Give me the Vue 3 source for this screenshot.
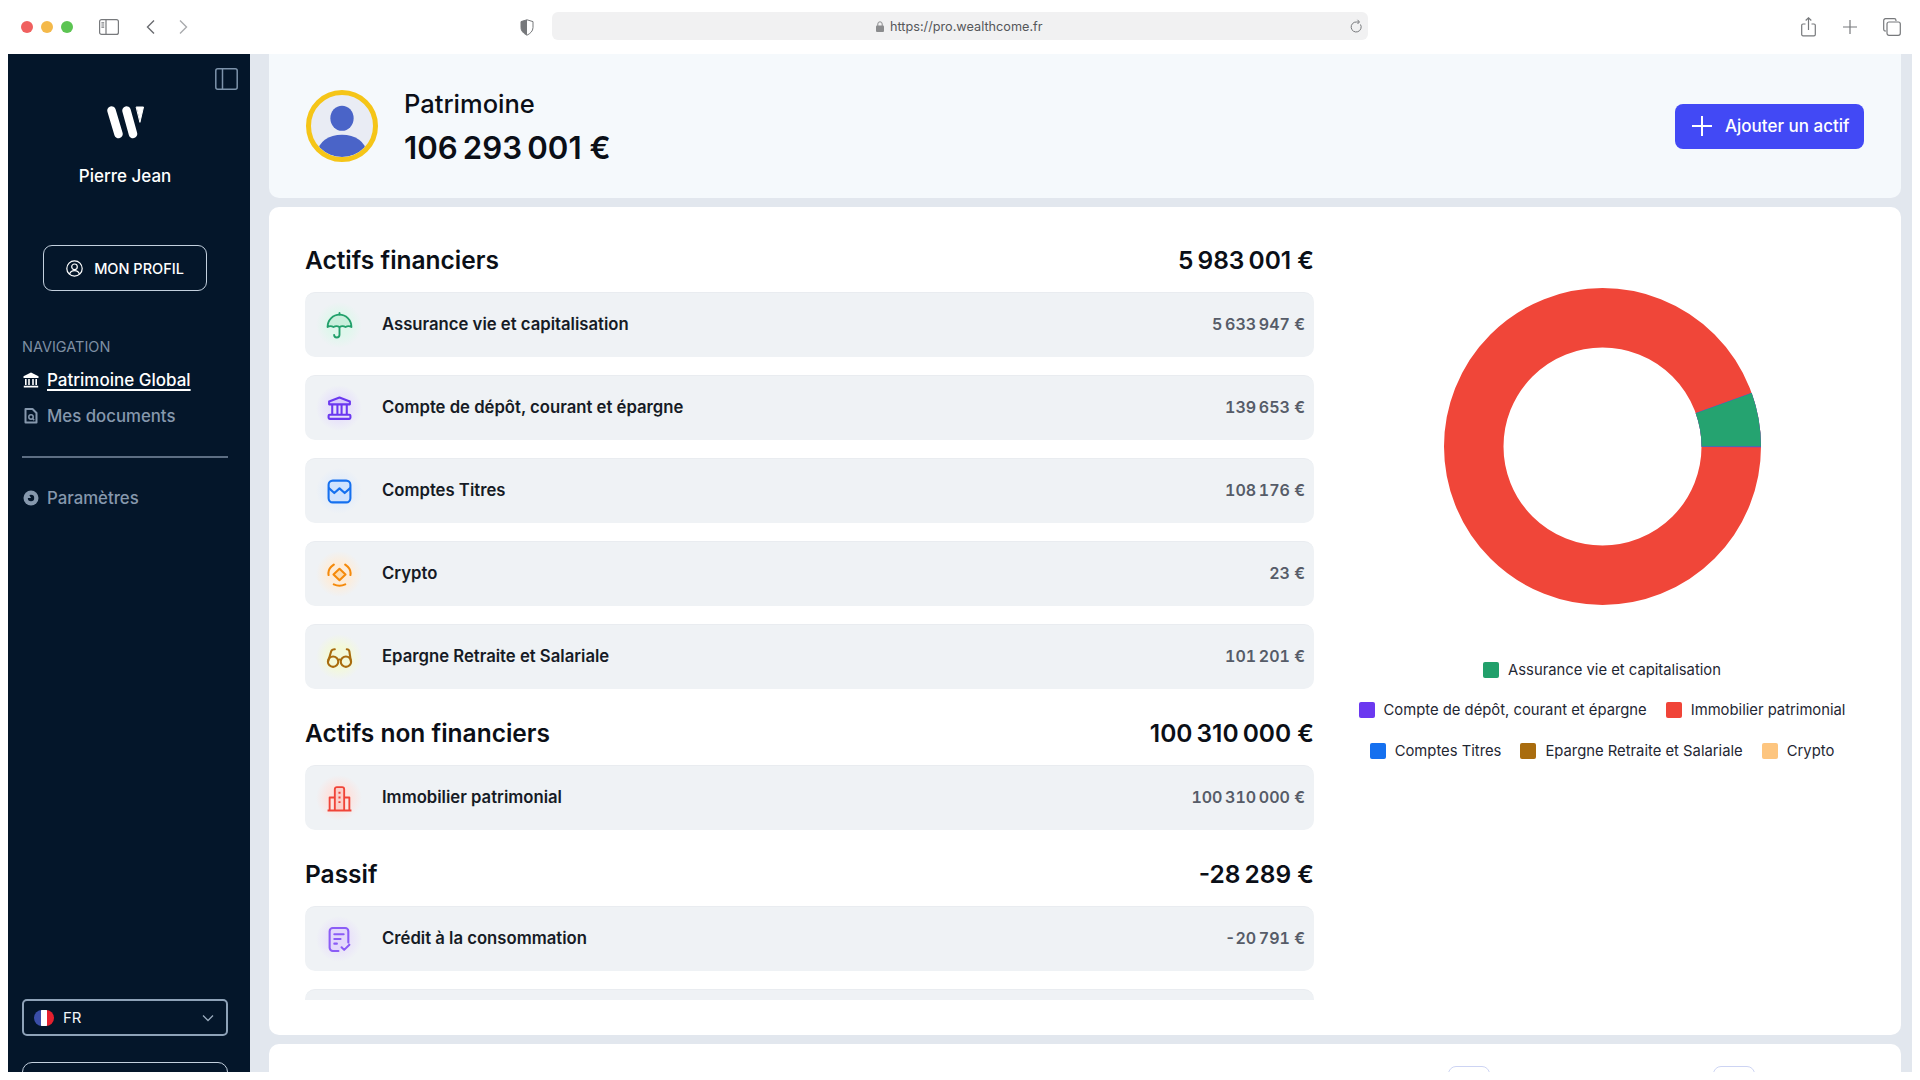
<script setup>
import { computed } from 'vue'

const sections = [
  {
    title: 'Actifs financiers',
    total: '5\u202f983\u202f001\u00a0€',
    rows: [
      { icon: 'umbrella', tone: 'green', name: 'Assurance vie et capitalisation', value: '5\u202f633\u202f947\u00a0€' },
      { icon: 'bank', tone: 'violet', name: 'Compte de dépôt, courant et épargne', value: '139\u202f653\u00a0€' },
      { icon: 'picture', tone: 'blue', name: 'Comptes Titres', value: '108\u202f176\u00a0€' },
      { icon: 'crypto', tone: 'orange', name: 'Crypto', value: '23\u00a0€' },
      { icon: 'glasses', tone: 'brown', name: 'Epargne Retraite et Salariale', value: '101\u202f201\u00a0€' }
    ]
  },
  {
    title: 'Actifs non financiers',
    total: '100\u202f310\u202f000\u00a0€',
    rows: [{ icon: 'building', tone: 'red', name: 'Immobilier patrimonial', value: '100\u202f310\u202f000\u00a0€' }]
  },
  {
    title: 'Passif',
    total: '-28\u202f289\u00a0€',
    rows: [
      { icon: 'doc', tone: 'lilac', name: 'Crédit à la consommation', value: '-20\u202f791\u00a0€' },
      { icon: '', tone: 'lilac', name: '', value: '' }
    ]
  }
]

const legendRows = [
  [{ label: 'Assurance vie et capitalisation', color: '#22a06b' }],
  [
    { label: 'Compte de dépôt, courant et épargne', color: '#6b38f0' },
    { label: 'Immobilier patrimonial', color: '#f04438' }
  ],
  [
    { label: 'Comptes Titres', color: '#1570ef' },
    { label: 'Epargne Retraite et Salariale', color: '#a96c0e' },
    { label: 'Crypto', color: '#fdc57f' }
  ]
]

const radius = 128.75
const circumference = 2 * Math.PI * radius
const greenArc = computed(() => (19.7 / 360) * circumference)
</script>

<template>
  <div class="window">
    <header class="chrome">
      <div class="chrome-left">
        <span class="light light-red"></span>
        <span class="light light-amber"></span>
        <span class="light light-green"></span>
        <svg class="chrome-sidebar" width="20" height="16" viewBox="0 0 20 16" fill="none" stroke="#77797c" stroke-width="1.2">
          <rect x="0.6" y="0.6" width="18.8" height="14.8" rx="2" />
          <path d="M7 .6v14.8M2.4 3.8h2.8M2.4 6h2.8M2.4 8.2h2.8" />
        </svg>
        <svg class="chrome-back" width="11" height="16" viewBox="0 0 11 16" fill="none" stroke="#6a6c70" stroke-width="1.4">
          <path d="M9 1.5 2.5 8 9 14.5" />
        </svg>
        <svg class="chrome-forward" width="11" height="16" viewBox="0 0 11 16" fill="none" stroke="#a9abae" stroke-width="1.4">
          <path d="M2 1.5 8.500 8 2 14.500" />
        </svg>
        <svg class="chrome-shield" width="14" height="17" viewBox="0 0 14 17">
          <path d="M7 .8 1 2.600v6c0 3.500 2.800 6 6 7.600 3.200-1.600 6-4.100 6-7.600v-6z" fill="#fff" stroke="#76787b" stroke-width="1" />
          <path d="M7 .8 1 2.600v6c0 3.500 2.800 6 6 7.600z" fill="#76787b" />
        </svg>
      </div>
      <div class="url-bar">
        <span class="url-main">
          <svg width="8" height="11" viewBox="0 0 8 11">
            <rect y="4.500" width="8" height="6.500" rx="1" fill="#8b8c8e" />
            <path d="M1.800 5V3a2.200 2.200 0 0 1 4.400 0v2" fill="none" stroke="#8b8c8e" stroke-width="1" />
          </svg>
          <span class="url-text">https://pro.wealthcome.fr</span>
        </span>
        <svg class="url-reload" width="12" height="14" viewBox="0 0 12 14" fill="none" stroke="#77797c" stroke-width="1">
          <path d="M10.500 5.500A5 5 0 1 1 6.500 3H9" />
          <path d="M7.500 .8 9.500 3 7.500 5" />
        </svg>
      </div>
      <div class="chrome-right">
        <svg width="15" height="20" viewBox="0 0 15 20" fill="none" stroke="#77797c" stroke-width="1.200">
          <path d="M4.500 7H2a1.300 1.300 0 0 0-1.300 1.300v9.200A1.300 1.300 0 0 0 2 18.800h11a1.300 1.300 0 0 0 1.300-1.300V8.300A1.300 1.300 0 0 0 13 7h-2.500" />
          <path d="M7.500 13V1M4.700 3.500 7.500.8l2.800 2.700" />
        </svg>
        <svg width="14" height="14" viewBox="0 0 14 14" fill="none" stroke="#77797c" stroke-width="1.200">
          <path d="M7 0v14M0 7h14" />
        </svg>
        <svg width="18" height="18" viewBox="0 0 18 18" fill="none" stroke="#77797c" stroke-width="1.200">
          <path d="M3 13H2.500A1.800 1.800 0 0 1 .7 11.200V2.500A1.800 1.800 0 0 1 2.500.7h8.700A1.800 1.800 0 0 1 13 2.500V3" />
          <rect x="4" y="4" width="13.300" height="13.300" rx="2" />
        </svg>
      </div>
    </header>

    <div class="app">
      <aside class="sidebar">
        <div class="side-top">
          <svg class="collapse" width="23" height="22" viewBox="0 0 23 22" fill="none" stroke="#7d93ab" stroke-width="1.500">
            <rect x="0.800" y="0.800" width="21.400" height="20.400" rx="2" />
            <path d="M7.500 .8v20.400" />
          </svg>
        </div>
        <svg class="logo" width="38" height="33" viewBox="0 0 38 33" fill="#fff" stroke="#fff" stroke-linecap="round">
          <path d="M4.500 4.500 11.500 28" stroke-width="8.500" fill="none" />
          <path d="M19.500 4.500 26 28" stroke-width="8.500" fill="none" />
          <path d="M29.500 1h7L33 16z" stroke-width="1" stroke-linejoin="round" />
        </svg>
        <div class="user-name">Pierre Jean</div>
        <button class="profile-btn">
          <svg width="17" height="17" viewBox="0 0 17 17" fill="none" stroke="#fff" stroke-width="1.200">
            <circle cx="8.500" cy="8.500" r="7.700" />
            <circle cx="8.500" cy="6.800" r="2.800" />
            <path d="M3.500 14.200c.8-2.500 2.700-3.500 5-3.500s4.200 1 5 3.500" />
          </svg>
          MON PROFIL
        </button>
        <div class="nav-title">NAVIGATION</div>
        <a class="nav-item active">
          <svg width="16" height="16" viewBox="0 0 16 16" fill="#fff">
            <path d="M8 .5.5 4.300V6h15V4.300z" />
            <path d="M2 7h1.600v6H2zM5.200 7h1.600v6H5.200zM9.200 7h1.600v6H9.200zM12.400 7H14v6h-1.600zM.8 13.800h14.400v1.700H.8z" />
          </svg>
          <span>Patrimoine Global</span>
        </a>
        <a class="nav-item">
          <svg width="16" height="16" viewBox="0 0 16 16" fill="none" stroke="#8698ad" stroke-width="2">
            <path d="M2.500 1h7L13.500 5v9.500h-11z" stroke-linejoin="round" />
            <circle cx="8" cy="9" r="2.200" stroke-width="1.500" />
            <path d="m9.700 10.700 1.500 1.500" stroke-width="1.500" />
          </svg>
          <span>Mes documents</span>
        </a>
        <div class="nav-divider"></div>
        <a class="nav-item">
          <svg width="16" height="16" viewBox="0 0 16 16">
            <circle cx="8" cy="8" r="7.500" fill="#8698ad" />
            <circle cx="8" cy="8" r="3.200" fill="#04162a" />
            <path d="M3.500 8H8L5.500 3.500z" fill="#8698ad" />
          </svg>
          <span>Paramètres</span>
        </a>
        <div class="lang-select">
          <span class="flag"><i class="f-blue"></i><i class="f-white"></i><i class="f-red"></i></span>
          <span class="lang-code">FR</span>
          <svg class="lang-caret" width="12" height="8" viewBox="0 0 12 8" fill="none" stroke="#9aabbd" stroke-width="1.300">
            <path d="m1 1.500 5 5 5-5" />
          </svg>
        </div>
        <div class="side-bottom-btn"></div>
      </aside>

      <main class="content">
        <section class="summary">
          <div class="avatar">
            <svg width="62" height="62" viewBox="0 0 64 64">
              <defs>
                <clipPath id="avatar-clip"><circle cx="32" cy="32" r="32" /></clipPath>
              </defs>
              <g clip-path="url(#avatar-clip)" fill="#4a64c8">
                <ellipse cx="32" cy="24" rx="12" ry="13" />
                <ellipse cx="32" cy="59" rx="25" ry="18" />
              </g>
            </svg>
          </div>
          <div class="summary-text">
            <div class="summary-title">Patrimoine</div>
            <div class="summary-total">106&#8239;293&#8239;001&nbsp;€</div>
          </div>
          <button class="add-btn">
            <svg width="20" height="20" viewBox="0 0 20 20" stroke="#fff" stroke-width="2">
              <path d="M10 0v20M0 10h20" />
            </svg>
            Ajouter un actif
          </button>
        </section>

        <section class="main-card">
          <div class="list-col">
            <div v-for="section in sections" :key="section.title" class="group">
              <div class="group-head">
                <h2>{{ section.title }}</h2>
                <span>{{ section.total }}</span>
              </div>
              <div class="rows">
                <div v-for="row in section.rows" :key="row.name" class="row">
                  <span class="icon-wrap" :class="'tone-' + row.tone">
                    <svg v-if="row.icon === 'umbrella'" width="27" height="27" viewBox="0 0 26 26" fill="none" stroke="#22a06b" stroke-width="1.800" stroke-linecap="round" stroke-linejoin="round">
                      <path d="M1.500 14.500C1.500 7.500 7 2.500 13 2.500s11.500 5 11.500 12c-1.700-1.100-3.900-1.100-5.700 0-1.800-1.100-4-1.100-5.800 0-1.800-1.100-4-1.100-5.800 0-1.800-1.100-4-1.100-5.700 0z" fill="#c9efdc" />
                      <path d="M13 2.500V1M13 14.500V22a2.600 2.600 0 0 1-5.200 0" />
                    </svg>
                    <svg v-else-if="row.icon === 'bank'" width="27" height="27" viewBox="0 0 26 26" fill="none" stroke="#6b38f0" stroke-width="2" stroke-linejoin="round">
                      <path d="M13 2.500 3 6.200V9h20V6.200z" fill="#d8ccfb" />
                      <path d="M6 9v10M11 9v10M15 9v10M20 9v10" />
                      <rect x="2.500" y="19" width="21" height="4" rx="1" />
                    </svg>
                    <svg v-else-if="row.icon === 'picture'" width="27" height="27" viewBox="0 0 26 26" fill="none" stroke="#1570ef" stroke-width="2" stroke-linejoin="round">
                      <rect x="2.500" y="2.500" width="21" height="21" rx="4" fill="#cfe2fd" />
                      <path d="M2.500 9.500 8 14.500l5-4.500 5 4.500 5.500-5" />
                    </svg>
                    <svg v-else-if="row.icon === 'crypto'" width="27" height="27" viewBox="0 0 26 26" fill="none" stroke="#f58a0b" stroke-width="2" stroke-linecap="round" stroke-linejoin="round">
                      <path d="m13 7.500 5.800 5.500-5.800 5.500L7.200 13z" fill="#fddcb0" />
                      <path d="M7.500 3.500C3.800 6 1.800 10 2.500 13.500M18.500 3.500c3.700 2.500 5.700 6.500 5 10M7.500 22.500c3.500 1.700 7.500 1.700 11 0" />
                    </svg>
                    <svg v-else-if="row.icon === 'glasses'" width="27" height="27" viewBox="0 0 26 26" fill="none" stroke="#a96c0e" stroke-width="2" stroke-linecap="round">
                      <circle cx="6.800" cy="17" r="5" />
                      <circle cx="19.200" cy="17" r="5" />
                      <path d="M11.500 15.500a2.500 2.500 0 0 1 3 0M2 17 5 7c.5-1.500 1.800-2 3.500-2M24 17 22.500 7c-.3-1.500-1.300-2-2.500-2" />
                    </svg>
                    <svg v-else-if="row.icon === 'building'" width="27" height="27" viewBox="0 0 26 26" fill="none" stroke="#f04438" stroke-width="1.800" stroke-linejoin="round">
                      <path d="M1.500 24.500h23M8.500 24.500V4a2 2 0 0 1 2-2h5a2 2 0 0 1 2 2v20.500" fill="#fbd0cb" />
                      <path d="M8.500 12H3.500v12.500M17.500 12h5v12.500M12 7.500h2M12 12h2M12 16.500h2" />
                    </svg>
                    <svg v-else-if="row.icon === 'doc'" width="27" height="27" viewBox="0 0 26 26" fill="none" stroke="#8b5cf6" stroke-width="2" stroke-linecap="round" stroke-linejoin="round">
                      <path d="M12 24H6.500A3 3 0 0 1 3.500 21V5a3 3 0 0 1 3-3h12a3 3 0 0 1 3 3v11" fill="#e3d8fb" />
                      <path d="M8 8h9M8 12.500h6M8 17h2.500M15 20.500l2.500 2.500 5-5" />
                    </svg>
                  </span>
                  <span class="row-name">{{ row.name }}</span>
                  <span class="row-value">{{ row.value }}</span>
                </div>
              </div>
            </div>
          </div>

          <div class="chart-col">
            <svg class="donut" width="317" height="317" viewBox="0 0 317 317" fill="none">
              <circle cx="158.500" cy="158.500" :r="radius" stroke="#f04639" stroke-width="59.500" />
              <circle
                cx="158.500"
                cy="158.500"
                :r="radius"
                stroke="#6b38f0"
                stroke-width="59.500"
                :stroke-dasharray="(greenArc + 0.8) + ' ' + circumference"
                transform="rotate(-19.800 158.500 158.500)"
              />
              <circle
                cx="158.500"
                cy="158.500"
                :r="radius"
                stroke="#25a370"
                stroke-width="59.500"
                :stroke-dasharray="greenArc + ' ' + circumference"
                transform="rotate(-19.700 158.500 158.500)"
              />
            </svg>
            <div class="legend">
              <div v-for="(line, i) in legendRows" :key="i" class="legend-line">
                <span v-for="item in line" :key="item.label" class="legend-item">
                  <i class="swatch" :style="{ background: item.color }"></i>
                  {{ item.label }}
                </span>
              </div>
            </div>
          </div>
        </section>

        <section class="next-card">
          <span class="mini-btn"></span>
          <span class="mini-btn"></span>
        </section>
      </main>
    </div>
  </div>
</template>

<style>
html, body {
  margin: 0;
  background: #fff;
}
</style>

<style scoped>
.window {
  width: 1920px;
  height: 1080px;
  background: #fff;
  overflow: hidden;
  font-family: Inter, "Liberation Sans", sans-serif;
  color: #0b0f17;
}
.chrome {
  height: 54px;
  display: flex;
  background: #fff;
}
.chrome-left {
  width: 552px;
  height: 54px;
  box-sizing: border-box;
  padding: 0 18px 0 21px;
  display: flex;
  align-items: center;
  gap: 8px;
}
.light {
  width: 12px;
  height: 12px;
  border-radius: 50%;
}
.light-red { background: #f0605f; }
.light-amber { background: #f4b94a; }
.light-green { background: #5cc452; }
.chrome-sidebar { margin-left: 18px; }
.chrome-back { margin-left: 18px; }
.chrome-forward { margin-left: 14px; }
.chrome-shield { margin-left: auto; }
.url-bar {
  width: 816px;
  height: 28px;
  margin-top: 12px;
  box-sizing: border-box;
  padding: 0 6px 0 0;
  border-radius: 6px;
  background: #f1f1f2;
  display: flex;
  align-items: center;
}
.url-main {
  margin-left: 324px;
  display: flex;
  align-items: center;
  gap: 6px;
}
.url-text {
  font-size: 12.700px;
  color: #55575a;
  font-family: Inter, sans-serif;
}
.url-reload { margin-left: auto; }
.chrome-right {
  flex: 1;
  height: 54px;
  display: flex;
  align-items: center;
  padding-left: 433px;
  gap: 26.500px;
}
.app {
  height: 1018px;
  margin: 0 8px;
  display: flex;
  overflow: hidden;
}
.sidebar {
  width: 242px;
  flex: none;
  box-sizing: border-box;
  background: #04162a;
  padding: 14px 22px 0 14px;
  display: flex;
  flex-direction: column;
  color: #fff;
}
.side-top {
  display: flex;
  justify-content: flex-end;
  margin-right: -10px;
}
.logo {
  margin: 16px 0 0 85px;
}
.user-name {
  margin-top: 27px;
  text-align: center;
  width: 206px;
  font-size: 17px;
  font-weight: 500;
  line-height: 20px;
}
.profile-btn {
  margin: 59px 0 0 21px;
  width: 164px;
  height: 46px;
  background: none;
  border: 1.500px solid #c3d0de;
  border-radius: 9px;
  display: flex;
  align-items: center;
  justify-content: center;
  gap: 11px;
  color: #fff;
  font: 500 14.500px Inter, sans-serif;
}
.nav-title {
  margin-top: 47px;
  font-size: 14.500px;
  line-height: 18px;
  color: #7e8fa3;
}
.nav-item {
  display: flex;
  align-items: center;
  gap: 8px;
  margin: 0 0 0 1px;
  height: 36px;
  font-size: 16.800px;
  font-weight: 500;
  color: #8698ad;
}
.nav-title + .nav-item { margin-top: 6px; }
.nav-item.active {
  color: #fff;
  font-size: 17px;
}
.nav-item.active span {
  text-decoration: underline;
  text-underline-offset: 3px;
  text-decoration-thickness: 1.500px;
}
.nav-divider {
  height: 2px;
  width: 206px;
  background: #5d6e83;
  margin: 22px 0 22px;
}
.lang-select {
  margin-top: auto;
  width: 206px;
  height: 37px;
  box-sizing: border-box;
  border: 2px solid #8ea2b8;
  border-radius: 5px;
  display: flex;
  align-items: center;
  padding: 0 12px 0 10px;
}
.flag {
  width: 20px;
  height: 16px;
  border-radius: 8px;
  overflow: hidden;
  display: flex;
}
.flag i { flex: 1; }
.f-blue { background: #3a4ea8; }
.f-white { background: #fff; }
.f-red { background: #e5202e; }
.lang-code {
  margin-left: 9px;
  font-size: 15px;
  color: #f1f5f9;
}
.lang-caret { margin-left: auto; }
.side-bottom-btn {
  margin-top: 26px;
  width: 206px;
  height: 46px;
  flex: none;
  box-sizing: border-box;
  border: 1.500px solid #c3d0de;
  border-radius: 10px;
  margin-bottom: -36px;
}
.content {
  flex: 1;
  min-width: 0;
  background: #e2e7ee;
  padding: 0 11px 0 19px;
  display: flex;
  flex-direction: column;
  gap: 9px;
}
.summary {
  height: 144px;
  flex: none;
  box-sizing: border-box;
  background: #f5f9fc;
  border-radius: 0 0 10px 10px;
  display: flex;
  align-items: center;
  padding: 0 37px 0 37px;
}
.avatar {
  width: 72px;
  height: 72px;
  box-sizing: border-box;
  border: 5px solid #f5c518;
  border-radius: 50%;
  background: #e9ecf4;
  overflow: hidden;
}
.avatar svg { display: block; }
.summary-text {
  margin-left: 26px;
  display: flex;
  flex-direction: column;
}
.summary-title {
  margin-top: 4px;
  font-size: 25.500px;
  font-weight: 500;
  line-height: 30px;
}
.summary-total {
  margin-top: 10px;
  font-size: 31.200px;
  font-weight: 600;
  line-height: 38px;
}
.add-btn {
  margin-left: auto;
  height: 45px;
  width: 189px;
  box-sizing: border-box;
  padding: 0 0 0 17px;
  border: none;
  border-radius: 8px;
  background: #4249f5;
  color: #fff;
  display: flex;
  align-items: center;
  gap: 13px;
  font: 500 17px Inter, sans-serif;
}
.main-card {
  height: 828px;
  flex: none;
  box-sizing: border-box;
  background: #fff;
  border-radius: 10px;
  display: flex;
  padding: 37px 28px 35px 36px;
  gap: 17px;
}
.list-col {
  width: 1009px;
  flex: none;
  height: 756px;
  overflow: hidden;
}
.group + .group { margin-top: 28px; }
.group-head {
  height: 32px;
  margin-bottom: 16px;
  display: flex;
  align-items: center;
  justify-content: space-between;
  font-size: 24.500px;
  font-weight: 600;
  line-height: 32px;
  color: #0b0f17;
}
.group-head h2 {
  margin: 0;
  font: inherit;
}
.rows {
  display: flex;
  flex-direction: column;
  gap: 18px;
}
.row {
  height: 65px;
  flex: none;
  box-sizing: border-box;
  background: #eff2f5;
  border-top: 1px solid #e9ecf0;
  border-radius: 10px;
  display: flex;
  align-items: center;
  padding: 0 9px 0 11px;
}
.icon-wrap {
  width: 46px;
  height: 46px;
  flex: none;
  border-radius: 50%;
  display: flex;
  align-items: center;
  justify-content: center;
}
.tone-green { background: radial-gradient(circle closest-side, #dff7ec 45%, #eff2f5 100%); }
.tone-violet { background: radial-gradient(circle closest-side, #e7e1fb 45%, #eff2f5 100%); }
.tone-blue { background: radial-gradient(circle closest-side, #e2ecfb 45%, #eff2f5 100%); }
.tone-orange { background: radial-gradient(circle closest-side, #fdecd9 45%, #eff2f5 100%); }
.tone-brown { background: radial-gradient(circle closest-side, #f3f9d9 45%, #eff2f5 100%); }
.tone-red { background: radial-gradient(circle closest-side, #fce3df 45%, #eff2f5 100%); }
.tone-lilac { background: radial-gradient(circle closest-side, #e9e2fa 45%, #eff2f5 100%); }
.row-name {
  margin: 0 0 2px 20px;
  font-size: 16.700px;
  font-weight: 600;
  color: #161b25;
}
.row-value {
  margin: 0 0 2px auto;
  font-size: 16px;
  font-weight: 600;
  color: #565c68;
  font-variant-numeric: tabular-nums;
}
.chart-col {
  flex: 1;
  min-width: 0;
  display: flex;
  flex-direction: column;
  align-items: center;
}
.donut {
  margin-top: 44px;
  flex: none;
}
.legend {
  margin-top: 56px;
  display: flex;
  flex-direction: column;
  gap: 22.400px;
}
.legend-line {
  display: flex;
  justify-content: center;
  gap: 19px;
  white-space: nowrap;
}
.legend-item {
  display: flex;
  align-items: center;
  gap: 9px;
  font-size: 14.800px;
  line-height: 18px;
  color: #1f2733;
}
.swatch {
  width: 16px;
  height: 16px;
  border-radius: 2px;
  flex: none;
}
.next-card {
  flex: 1;
  min-height: 0;
  background: #fff;
  border-radius: 10px 10px 0 0;
  position: relative;
  display: flex;
  padding: 22px 0 0 1179px;
  gap: 223px;
  overflow: hidden;
}
.mini-btn {
  width: 42px;
  height: 30px;
  flex: none;
  box-sizing: border-box;
  border: 1.500px solid #cdd4f3;
  border-radius: 8px;
}
</style>
